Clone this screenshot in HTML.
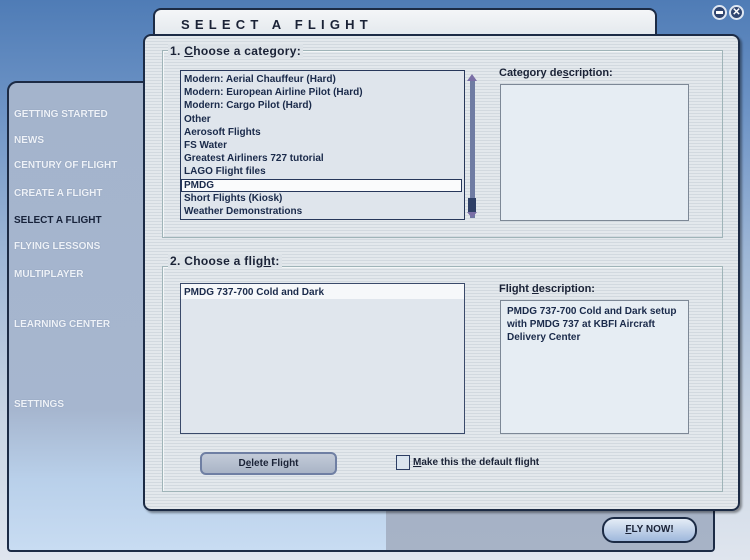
<!DOCTYPE html>
<html><head><style>
*{margin:0;padding:0;box-sizing:border-box}
body{width:750px;height:560px;overflow:hidden;position:relative;font-family:"Liberation Sans",sans-serif;background:linear-gradient(180deg,#4f7cb6 0%,#6e94c6 20%,#9db6d6 45%,#c9d5e4 75%,#dfe5ee 100%)}
.abs{position:absolute}
.nav{left:7px;top:81px;width:708px;height:471px;border:2px solid #1c2b45;border-radius:10px 4px 4px 4px;background:linear-gradient(180deg,#a4b4cc 0%,#a6b6cf 70%,#b9d0ea 85%,#c8dcf2 100%);overflow:hidden}
.nav .r{position:absolute;left:377px;top:0;right:0;bottom:0;background:linear-gradient(180deg,#9aa8be,#a7b3c6)}
.nv{position:absolute;left:5px;font-size:10px;font-weight:bold;color:#eef2f8;text-shadow:0 0 1px #7c8ca8}
.tab{left:153px;top:8px;width:504px;height:30px;border:2px solid #1c2b45;border-bottom:none;border-radius:8px 8px 0 0;background:linear-gradient(#f4f6f8,#e2e7ec)}
.tab span{position:absolute;left:26px;top:7px;font-size:13px;font-weight:bold;letter-spacing:5.2px;color:#1a2236}
.main{left:143px;top:34px;width:597px;height:477px;border:2px solid #1c2b45;border-radius:8px;background:repeating-linear-gradient(180deg,#e3e8ec 0,#e3e8ec 2px,#d2d9df 2px,#d2d9df 3px);box-shadow:2px 2px 2px rgba(0,0,0,.4)}
.grp{border:1px solid #9fb4b8;box-shadow:inset 1px 1px 0 #f4f7f8}
.gl{position:absolute;font-size:12px;font-weight:bold;color:#1a2236;background:#dde3e8;padding:0 2px;letter-spacing:.3px}
.list{background:#dfe5ec;border:1px solid #27375a;font-size:10px;font-weight:bold;color:#1a2a4a}
.list div{height:13.2px;line-height:13px;padding-left:3px}
.desc{background:#e6edf3;border:1px solid #7d8896;font-size:10px;font-weight:bold;color:#1a2a4a}
.lab{font-size:11px;font-weight:bold;color:#1a2236}
u{text-decoration:underline}
</style></head><body>
<div class="abs nav"><div class="r"></div>
<div class="nv" style="top:26px">GETTING STARTED</div>
<div class="nv" style="top:52px">NEWS</div>
<div class="nv" style="top:77px">CENTURY OF FLIGHT</div>
<div class="nv" style="top:105px">CREATE A FLIGHT</div>
<div class="nv" style="top:132px;color:#17223a;text-shadow:none">SELECT A FLIGHT</div>
<div class="nv" style="top:158px">FLYING LESSONS</div>
<div class="nv" style="top:186px">MULTIPLAYER</div>
<div class="nv" style="top:236px">LEARNING CENTER</div>
<div class="nv" style="top:316px">SETTINGS</div>
</div>
<div class="abs tab"><span>SELECT A FLIGHT</span></div>
<div class="abs main"></div>
<div class="abs grp" style="left:162px;top:50px;width:561px;height:188px"></div>
<div class="gl abs" style="left:168px;top:44px">1. <u>C</u>hoose a category:</div>
<div class="abs list" style="left:180px;top:70px;width:285px;height:150px;padding-top:2px">
<div>Modern: Aerial Chauffeur (Hard)</div><div>Modern: European Airline Pilot (Hard)</div><div>Modern: Cargo Pilot (Hard)</div><div>Other</div><div>Aerosoft Flights</div><div>FS Water</div><div>Greatest Airliners 727 tutorial</div><div>LAGO Flight files</div>
<div style="background:#fafbfc;border:1px solid #27375a;margin-right:2px;line-height:11px;padding-left:2px">PMDG</div>
<div>Short Flights (Kiosk)</div><div>Weather Demonstrations</div></div>
<div class="abs" style="left:470px;top:78px;width:5px;height:140px;background:#6f7ca3"></div>
<div class="abs" style="left:467px;top:74px;width:0;height:0;border-left:5.5px solid transparent;border-right:5.5px solid transparent;border-bottom:7px solid #7a6fa6"></div>
<div class="abs" style="left:468px;top:198px;width:8px;height:14px;background:#2e3f66"></div>
<div class="abs" style="left:467px;top:212px;width:0;height:0;border-left:5.5px solid transparent;border-right:5.5px solid transparent;border-top:6px solid #7a6fa6"></div>
<div class="abs lab" style="left:499px;top:67px">Category de<u>s</u>cription:</div>
<div class="abs desc" style="left:500px;top:84px;width:189px;height:137px"></div>
<div class="abs grp" style="left:162px;top:266px;width:561px;height:226px"></div>
<div class="gl abs" style="left:168px;top:254px">2. Choose a flig<u>h</u>t:</div>
<div class="abs list" style="left:180px;top:283px;width:285px;height:151px;background:#e0e6ed;border-color:#3a4a6a">
<div style="background:#f6f8fa;padding-top:2px;height:15px">PMDG 737-700 Cold and Dark</div></div>
<div class="abs lab" style="left:499px;top:283px">Flight <u>d</u>escription:</div>
<div class="abs desc" style="left:500px;top:300px;width:189px;height:134px;padding:4px 6px;line-height:13px">PMDG 737-700 Cold and Dark setup with PMDG 737 at KBFI Aircraft Delivery Center</div>
<div class="abs" style="left:200px;top:452px;width:137px;height:23px;border:2px solid #6f7fa3;border-radius:6px;background:linear-gradient(#c3cbd8,#a9b4c6);font-size:10px;font-weight:bold;color:#1a2236;text-align:center;line-height:19px">D<u>e</u>lete Flight</div>
<div class="abs" style="left:396px;top:455px;width:14px;height:15px;border:1px solid #2d3e63;background:#dbe5ef"></div>
<div class="abs" style="left:413px;top:457px;font-size:10px;font-weight:bold;color:#1a2236"><u>M</u>ake this the default flight</div>
<div class="abs" style="left:602px;top:517px;width:95px;height:26px;border:2px solid #1c2b45;border-radius:12px;background:linear-gradient(#e4ecf6,#9fb8dc);font-size:10px;font-weight:bold;color:#1a2236;text-align:center;line-height:22px"><u>F</u>LY NOW!</div>
<div class="abs" style="left:712px;top:5px;width:15px;height:15px;border-radius:50%;background:#2f4570;border:2px solid #dfe7f2"><div style="position:absolute;left:2px;top:4px;width:7px;height:3px;background:#fff"></div></div>
<div class="abs" style="left:729px;top:5px;width:15px;height:15px;border-radius:50%;background:#2f4570;border:2px solid #dfe7f2;color:#fff;font-size:10px;font-weight:bold;text-align:center;line-height:11px">✕</div>
</body></html>
